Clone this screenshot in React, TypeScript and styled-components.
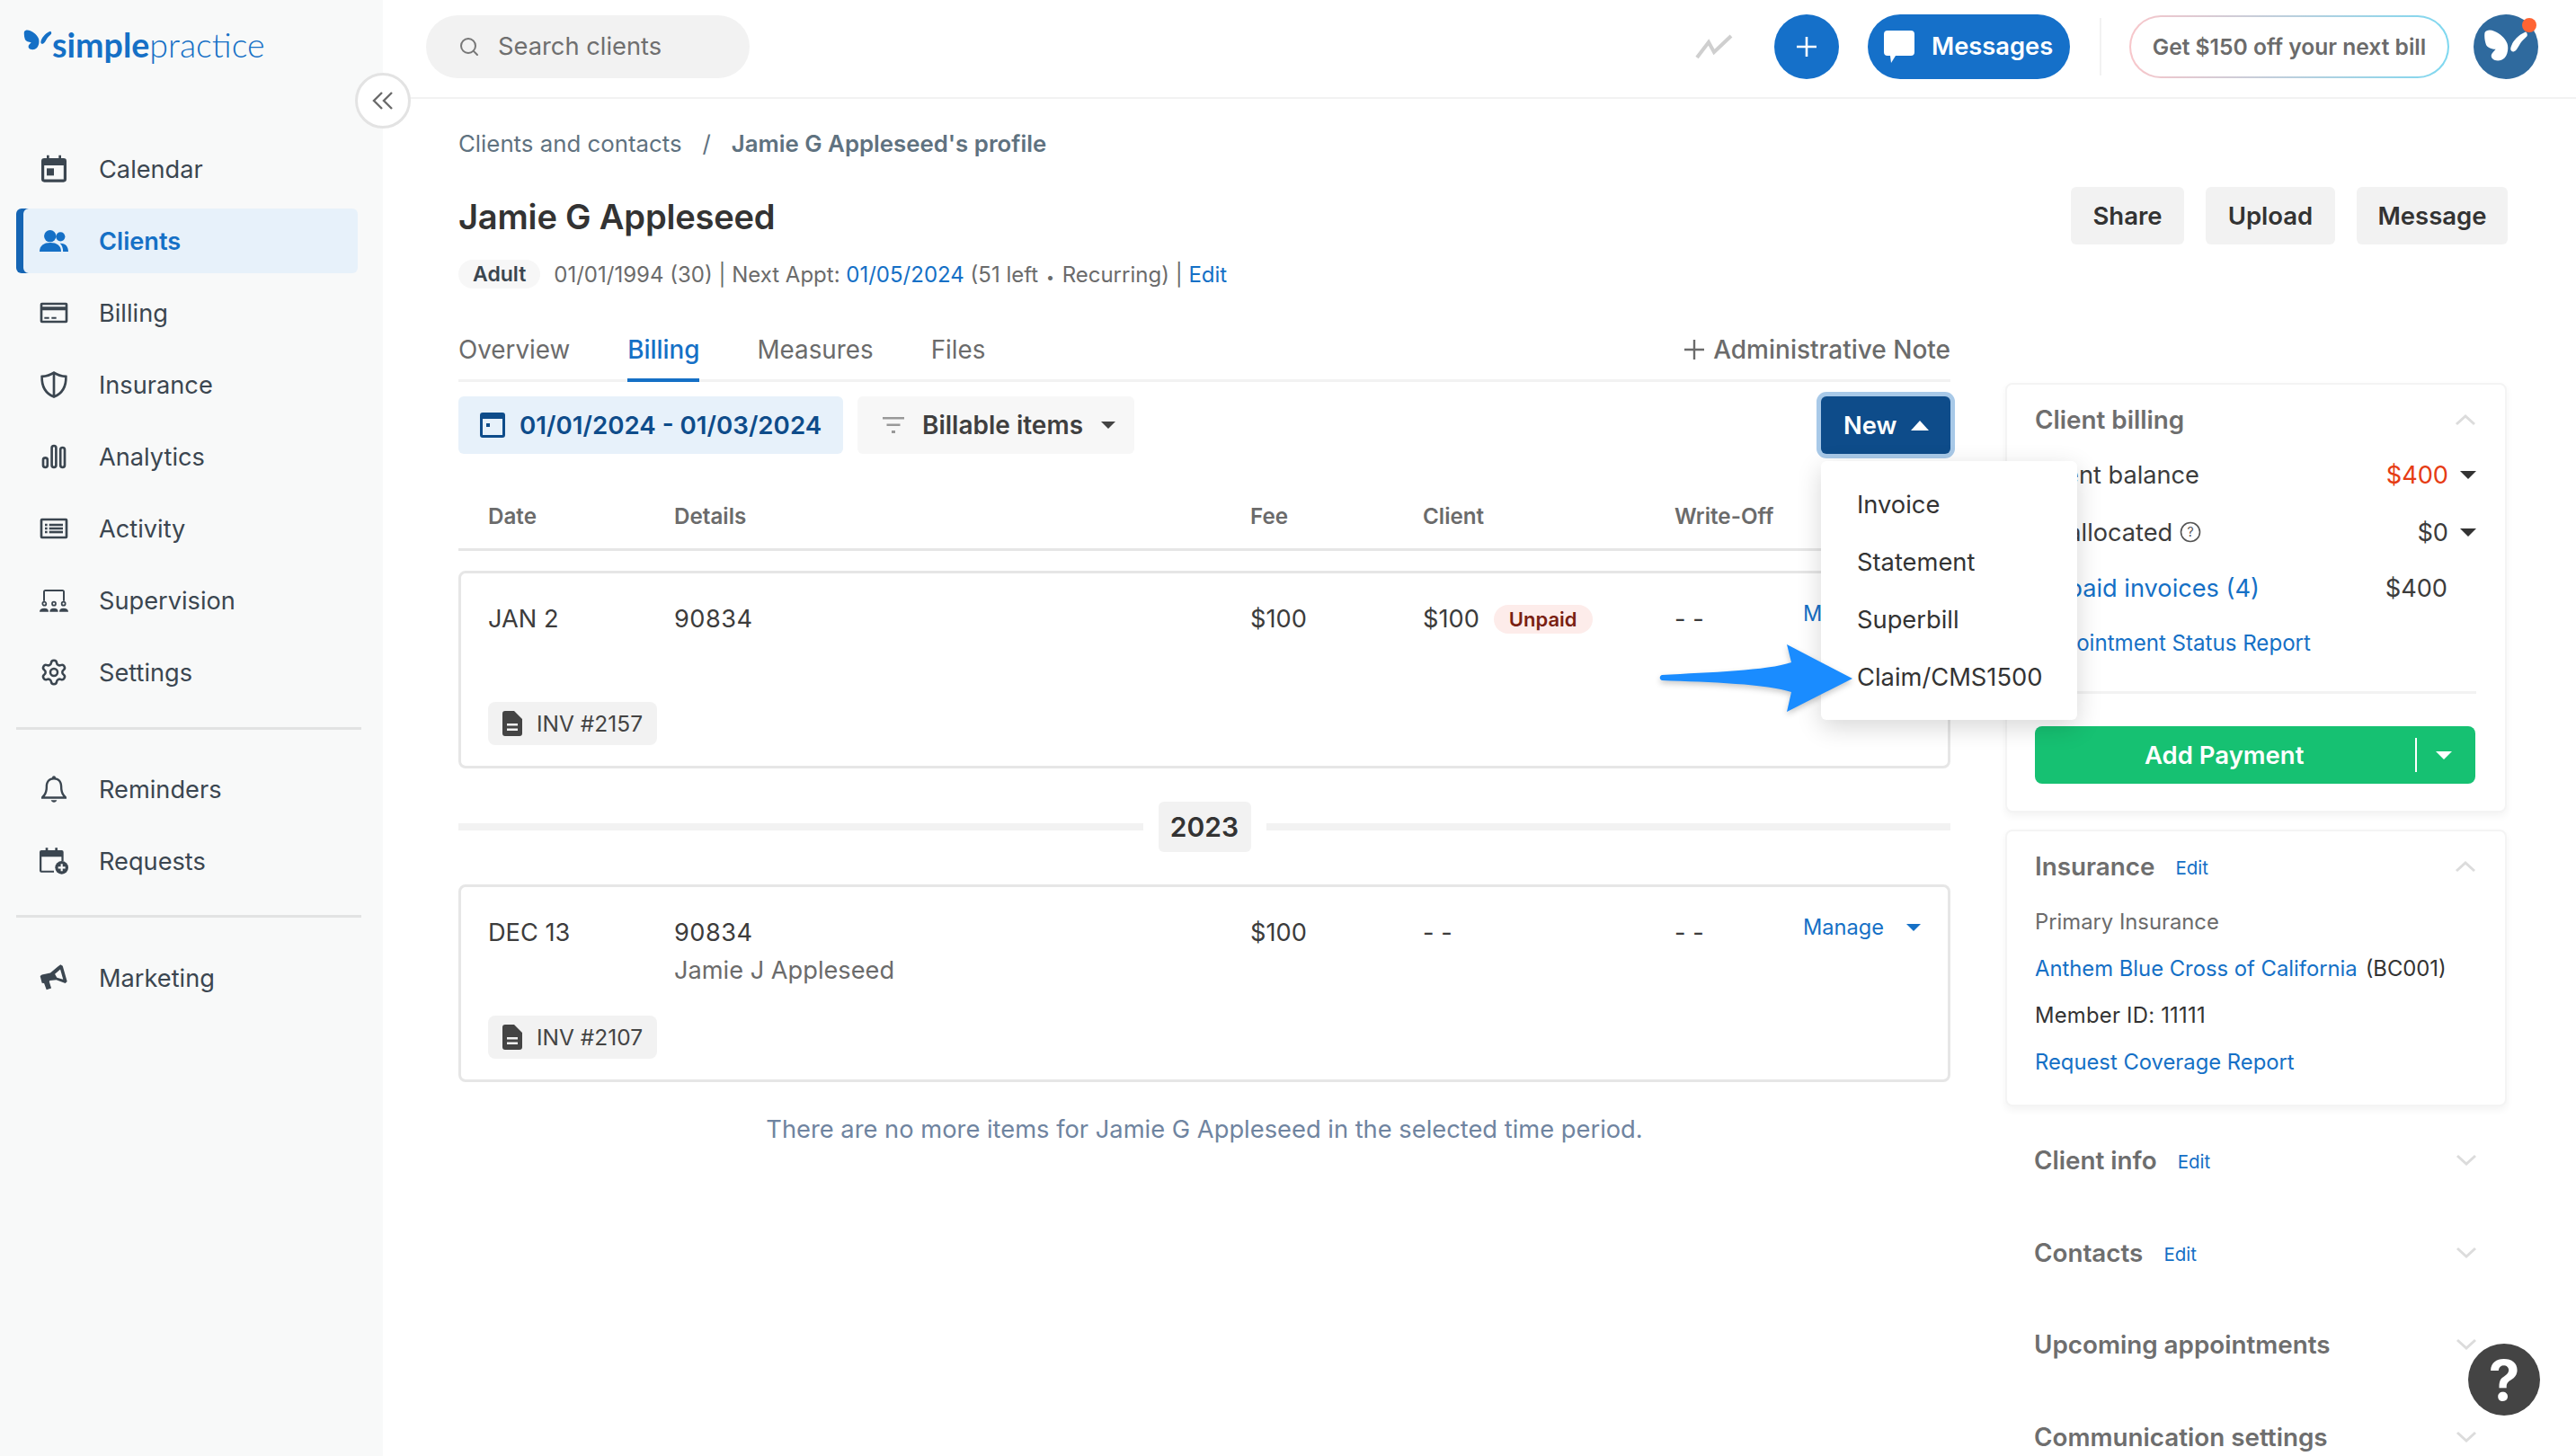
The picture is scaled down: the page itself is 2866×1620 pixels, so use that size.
import React from "react";
import styled, { createGlobalStyle } from "styled-components";
import { Settings, Search } from "lucide-react";

const Global = createGlobalStyle`
  html, body { margin: 0; padding: 0; background: #fff; }
  * { box-sizing: border-box; }
  body { font-family: Inter, "Liberation Sans", sans-serif; color: #333; overflow: hidden; }
`;

const Page = styled.div`position: relative; display: flex; width: 2866px; height: 1620px; overflow: hidden; background: #fff;`;
const Sidebar = styled.aside`width: 426px; flex: none; background: #f8f9f9; padding: 27px 0 0 18px;`;
const LogoWrap = styled.div`display: flex; align-items: flex-start; height: 125px; margin-left: 8px; color: #1570c6; svg { margin-top: 6px; }`;
const LogoText = styled.span`font-family: Lato, sans-serif; font-size: 37.6px; line-height: 48px; font-weight: 400; margin-top: -1px; b { font-weight: 700; } i { font-style: normal; font-weight: 300; }`;
const NavList = styled.nav`display: flex; flex-direction: column; gap: 8px; width: 380px;`;
const NavItem = styled.div<{ $active?: boolean }>`
  display: flex; align-items: center; gap: 34px; height: 72px; padding-left: 26px; border-radius: 6px;
  font-size: 27.2px; color: ${p => (p.$active ? "#1570c6" : "#3b4650")}; font-weight: ${p => (p.$active ? 600 : 400)};
  background: ${p => (p.$active ? "#e7f1fa" : "transparent")};
  box-shadow: ${p => (p.$active ? "inset 8px 0 0 #1565b4" : "none")};
`;
const NavIcon = styled.svg`width: 32px; height: 32px; flex: none; fill: currentColor;`;
const NavDivider = styled.div<{ $above: number; $below: number }>`width: 384px; height: 3px; background: #e2e3e3; margin: ${p => p.$above}px 0 ${p => p.$below}px;`;
const Collapse = styled.button`position: absolute; left: 395px; top: 81px; width: 62px; height: 62px; border-radius: 50%; background: #fff; border: 3px solid #e3e3e3; display: flex; align-items: center; justify-content: center; padding: 0; z-index: 3;`;

const Main = styled.div`flex: 1; min-width: 0; display: flex; flex-direction: column;`;
const Header = styled.header`height: 110px; flex: none; border-bottom: 2px solid #f2f2f2; display: flex; align-items: center; padding: 0 42px 5px 48px;`;
const SearchBox = styled.div`width: 360px; height: 70px; border-radius: 35px; background: #f2f2f2; display: flex; align-items: center; gap: 20px; padding-left: 36px; font-size: 27.3px; color: #6f6f6f; svg { color: #777; }`;
const Spacer = styled.div`flex: 1;`;
const Trend = styled.svg`width: 42px; height: 28px; margin-right: 46px;`;
const RoundBtn = styled.div`width: 72px; height: 72px; border-radius: 50%; background: #1570c9; display: flex; align-items: center; justify-content: center; margin-right: 32px;`;
const MsgBtn = styled.div`width: 225px; height: 72px; border-radius: 36px; background: #1570c9; color: #fff; font-size: 27.3px; font-weight: 600; display: flex; align-items: center; gap: 19px; padding-left: 18px;`;
const VRule = styled.div`width: 2px; height: 64px; background: #f2f2f2; margin: 0 31px 0 33px;`;
const Promo = styled.div`width: 356px; height: 70px; border-radius: 35px; border: 2.5px solid transparent; background: linear-gradient(#fff, #fff) padding-box, linear-gradient(90deg, #f8c6ca, #7ed8f0) border-box; display: flex; align-items: center; justify-content: center; font-size: 24.6px; font-weight: 600; color: #6b6b6b; white-space: nowrap;`;
const Avatar = styled.div`position: relative; width: 72px; height: 72px; border-radius: 50%; background: #2f6a9e; margin-left: 27px; display: flex; align-items: center; justify-content: center; color: #fff;`;
const Dot = styled.span`position: absolute; right: 2px; top: 4px; width: 16px; height: 16px; border-radius: 50%; background: #ff6433;`;

const Content = styled.div`padding: 33px 76px 0 84px;`;
const Crumbs = styled.div`display: flex; align-items: center; height: 32px; font-size: 25.8px; color: #5f7280; b { font-weight: 600; } span { margin: 0 23px; }`;
const TitleRow = styled.div`display: flex; align-items: center; justify-content: space-between; height: 64px; margin-top: 33px;`;
const Title = styled.h1`margin: 0 0 -1px; font-size: 38.1px; font-weight: 600; color: #333; letter-spacing: -0.2px;`;
const Actions = styled.div`display: flex; gap: 24px;`;
const GrayBtn = styled.div<{ $w: number }>`height: 64px; width: ${p => p.$w}px; border-radius: 6px; background: #f2f2f2; display: flex; align-items: center; justify-content: center; font-size: 27.5px; font-weight: 600; color: #333;`;
const MetaRow = styled.div`display: flex; align-items: center; height: 32px; margin-top: 17px; gap: 15px; font-size: 24px; color: #6b6b6b;`;
const Pill = styled.span`height: 32px; padding: 0 16px; border-radius: 16px; background: #f7f7f7; display: flex; align-items: center; font-size: 23px; font-weight: 600; color: #3b4650;`;
const Bullet = styled.span`font-size: 16px; margin: 0 2px;`;
const Link = styled.a`color: #1570c6; text-decoration: none;`;
const Columns = styled.div`display: grid; grid-template-columns: 1660px 558px; column-gap: 61px; margin-top: 32px;`;
const Left = styled.div``;
const Tabs = styled.div`display: flex; align-items: stretch; gap: 64px; height: 72px; border-bottom: 3px solid #f2f2f2;`;
const Tab = styled.div<{ $active?: boolean }>`display: flex; align-items: center; font-size: 27.8px; font-weight: ${p => (p.$active ? 500 : 400)}; color: ${p => (p.$active ? "#1570c6" : "#6b6b6b")}; height: 72px; ${p => p.$active && "box-shadow: inset 0 -4px 0 #1570c6;"}`;
const AdminNote = styled.div`margin-left: auto; display: flex; align-items: center; gap: 10px; font-size: 28px; font-weight: 500; color: #6b6b6b; height: 72px;`;
const Toolbar = styled.div`display: flex; gap: 16px; margin-top: 16px; height: 64px; align-items: center;`;
const DateBtn = styled.div`height: 64px; width: 428px; padding-left: 24px; border-radius: 6px; background: #e7f1fa; color: #0e4c8a; font-size: 27.7px; font-weight: 600; display: flex; align-items: center; gap: 16px; white-space: nowrap;`;
const FilterBtn = styled.div`height: 64px; width: 308px; padding-left: 28px; border-radius: 6px; background: #f7f7f7; color: #3f3f3f; font-size: 28px; font-weight: 600; display: flex; align-items: center; gap: 20px; white-space: nowrap;`;
const Caret = styled.span<{ $up?: boolean; $c?: string; $w?: number }>`
  display: inline-block; width: 0; height: 0; flex: none;
  border-left: ${p => (p.$w ?? 9)}px solid transparent; border-right: ${p => (p.$w ?? 9)}px solid transparent;
  ${p => (p.$up ? "border-bottom" : "border-top")}: ${p => Math.round((p.$w ?? 9) * 1.05)}px solid ${p => p.$c ?? "#333"};
`;
const NewWrap = styled.div`position: relative; margin-left: auto; z-index: 2;`;
const NewBtn = styled.div`width: 144px; height: 64px; border-radius: 6px; background: #0e4c8a; color: #fff; font-size: 27.3px; font-weight: 600; display: flex; align-items: center; gap: 16px; padding-left: 25px; box-shadow: 0 0 0 5px #a8c9e8;`;
const Menu = styled.div`position: absolute; left: 0; top: 72px; width: 285px; height: 288px; padding-top: 16px; background: #fff; border-radius: 6px; box-shadow: 0 8px 28px rgba(0,0,0,.16);`;
const MenuItem = styled.div`height: 64px; display: flex; align-items: center; padding-left: 40px; font-size: 27.3px; color: #333;`;
const Arrow = styled.svg`position: absolute; left: 1842px; top: 710px; width: 230px; height: 90px; z-index: 4; filter: drop-shadow(0 3px 3px rgba(0,0,0,.22));`;
const GridCols = "207px 641px 192px 280px 143px 1fr";
const THead = styled.div`display: grid; grid-template-columns: ${GridCols}; align-items: center; margin-top: 31px; height: 77px; padding: 2px 0 0 33px; border-bottom: 3px solid #e6e6e6; font-size: 24.2px; font-weight: 600; color: #6b6b6b;`;
const Card = styled.div<{ $mt: number }>`height: 220px; margin-top: ${p => p.$mt}px; padding: 33px 30px 0; border: 3px solid #e6e6e6; border-radius: 8px;`;
const RowGrid = styled.div`display: grid; grid-template-columns: ${GridCols}; height: 79px; font-size: 27.2px; line-height: 36px; color: #3c3c3c; white-space: nowrap;`;
const Code = styled.span`letter-spacing: 0.5px;`;
const Sub = styled.div`margin-top: 6px; color: #6b6b6b;`;
const ClientCell = styled.div`display: flex; align-items: flex-start; gap: 16px;`;
const Unpaid = styled.span`margin-top: 2px; height: 32px; padding: 0 17px; border-radius: 16px; background: #fdecea; color: #7a1f12; font-size: 22px; line-height: 32px; font-weight: 600;`;
const ManageCell = styled.div`display: flex; justify-content: space-between; align-items: center; height: 26px; line-height: 26px; font-size: 23.6px; color: #1570c6; margin-top: -1px;`;
const Chip = styled.div`display: inline-flex; align-items: center; gap: 16px; height: 48px; margin-top: 31px; padding: 0 16px; border-radius: 8px; background: #f2f2f2; font-size: 24.5px; color: #444;`;
const YearRow = styled.div`display: flex; align-items: center; gap: 17px; height: 56px; margin-top: 37px;`;
const YearLine = styled.div`flex: 1; height: 8px; background: #f2f2f2;`;
const YearChip = styled.div`width: 103px; height: 56px; border-radius: 6px; background: #f2f2f2; display: flex; align-items: center; justify-content: center; font-size: 30px; font-weight: 600; color: #333;`;
const EndNote = styled.div`margin-top: 35px; line-height: 36px; text-align: center; font-size: 27.3px; color: #6f84a0;`;
const Right = styled.div`margin-top: 73px;`;
const SideCard = styled.section<{ $h: number; $mt?: number }>`height: ${p => p.$h}px; margin-top: ${p => p.$mt ?? 0}px; padding: 21px 32px 0 31px; border: 2px solid #f4f4f4; border-radius: 8px; box-shadow: 0 4px 8px rgba(0,0,0,.05); background: #fff;`;
const CardHead = styled.div`display: flex; align-items: center; height: 36px; gap: 23px; font-size: 27.8px; font-weight: 600; color: #6e6e6e; white-space: nowrap;`;
const SmallEdit = styled.span`font-size: 20.5px; font-weight: 400; color: #1570c6; margin-top: 3px;`;
const Chevron = styled.svg`width: 24px; height: 14px; margin-left: auto; flex: none;`;
const BillingRow = styled.div<{ $mt: number }>`display: flex; align-items: center; height: 36px; margin-top: ${p => p.$mt}px; font-size: 27.2px; color: #3c3c3c; white-space: nowrap;`;
const Val = styled.span<{ $red?: boolean; $mr: number }>`margin-left: auto; margin-right: ${p => p.$mr}px; color: ${p => (p.$red ? "#e63c14" : "#3c3c3c")}; display: inline-flex;`;
const HelpDot = styled.svg`width: 24px; height: 24px; margin-left: 8px;`;
const SmallLink = styled.a`font-size: 24.1px; color: #1570c6;`;
const HRule = styled.div`height: 3px; background: #f2f2f2; margin-top: 36px;`;
const PayBtn = styled.div`height: 64px; margin-top: 36px; width: 490px; border-radius: 8px; background: #16c172; color: #fff; font-size: 27.5px; font-weight: 600; display: flex; align-items: center; padding-left: 122px;`;
const PayDivider = styled.div`width: 2px; height: 38px; background: #fff; margin-left: 124px; margin-right: 21px;`;
const InsRows = styled.div`margin-top: 17px;`;
const InsRow = styled.div<{ $gray?: boolean }>`height: 52px; display: flex; align-items: center; gap: 9px; font-size: 23.8px; color: ${p => (p.$gray ? "#6b6b6b" : "#333")}; white-space: nowrap;`;
const MemberId = styled.span`letter-spacing: 0.25px;`;
const Collapsed = styled.div`display: flex; flex-direction: column; gap: 66.5px; margin-top: 42px; padding: 0 33px 0 32px;`;
const Help = styled.div`position: fixed; left: 2746px; top: 1495px; width: 80px; height: 80px; border-radius: 50%; background: #444; color: #fff; display: flex; align-items: center; justify-content: center; font-size: 62px; font-weight: 700; z-index: 5;`;

const Butterfly = ({ w, h }: { w: number; h: number }) => (
  <svg width={w} height={h} viewBox="0 0 33 24" fill="currentColor" style={{ flex: "none" }}>
    <path d="M1 2C2 0 5-.5 8 1c4 1.500 8 5 9.500 9 1 3 .5 8-2 10.500-2 2-5 2.500-7.500 1.500-2.500-1-3-3.500-1-5.500l2-2.300C6 14 3 13 2 11 1 8 .5 5 1 2Z" />
    <path d="M31 1.500c1 .5 1.500 2 1 3-2 2-4 3.500-5 5.500-1.500 2.500-2.500 5-4.500 5.800-1.500.5-2.800-.8-2.500-2.300C20.500 10 24.500 4 31 1.500Z" />
  </svg>
);

const Icons: Record<string, React.ReactNode> = {
  calendar: <><path d="M6 .5h2V4H6zM16 .5h2V4h-2z" /><path fillRule="evenodd" d="M4 3h16a2.500 2.500 0 0 1 2.500 2.500v15A2.500 2.500 0 0 1 20 23H4a2.500 2.500 0 0 1-2.500-2.500v-15A2.500 2.500 0 0 1 4 3Zm-.1 6v11.600h16.200V9Z" /><rect x="6" y="11.500" width="6" height="6" /></>,
  clients: <><circle cx="8.800" cy="8" r="5" /><circle cx="17.500" cy="8.500" r="3.800" /><path d="M0 21c0-5 3.500-7.500 9-7.500s9 2.500 9 7.500Z" /><path d="M19.600 21c0-3-.8-5.300-2.600-7 4.500-.3 7 2.500 7 7Z" /></>,
  billing: <><path fillRule="evenodd" d="M2 3.500h20A1.500 1.500 0 0 1 23.500 5v14a1.500 1.500 0 0 1-1.500 1.500H2A1.500 1.500 0 0 1 .5 19V5A1.500 1.500 0 0 1 2 3.500Zm.5 6.500v8.500h19V10Zm0-4.500V7h19V5.500Z" /><path d="M4 15.500h4v1.500H4zM10 15.500h4v1.500h-4z" /></>,
  shield: <path fill="none" stroke="currentColor" strokeWidth="2" d="M12 2C15 4 18.500 5 22 5.200c.3 7.300-2.500 13.800-10 17C4.500 19 1.700 12.500 2 5.200 5.500 5 9 4 12 2Zm0 0v20" />,
  analytics: <g fill="none" stroke="currentColor" strokeWidth="2"><rect x="3" y="13" width="3.600" height="8" rx="1.800" /><rect x="10.200" y="3" width="3.600" height="18" rx="1.800" /><rect x="17.400" y="4.500" width="3.600" height="16.500" rx="1.800" /></g>,
  activity: <><path fillRule="evenodd" d="M2 3.500h20A1.500 1.500 0 0 1 23.500 5v14a1.500 1.500 0 0 1-1.500 1.500H2A1.500 1.500 0 0 1 .5 19V5A1.500 1.500 0 0 1 2 3.500Zm.5 2v13h19v-13Z" /><path d="M4.500 8h2v2h-2zM4.500 11h2v2h-2zM4.500 14h2v2h-2zM8 8h11.500v2H8zM8 11h11.500v2H8z" /><path d="M8 14h11.500v2H8z" /></>,
  supervision: <><path d="M3 12.500V5a2 2 0 0 1 2-2h14a2 2 0 0 1 2 2v7.500h-1.500v-8h-15v8Z" /><g fill="none" stroke="currentColor" strokeWidth="1.300"><circle cx="4" cy="14.800" r="1.500" /><circle cx="12" cy="14.800" r="1.500" /><circle cx="20" cy="14.800" r="1.500" /></g><path d="M0 21.500c0-2 1.500-3 4-3s3.500 1 3.500 3ZM8.500 21.500c0-2 1-3 3.500-3s3.500 1 3.500 3ZM16.500 21.500c0-2 1-3 3.500-3s4 1 4 3Z" /></>,
  bell: <><path d="M12 1c.9 0 1.500.7 1.500 1.500 3.800.8 5.500 3.700 5.500 7.500 0 4 1 6 3.500 8.500v1.500h-21v-1.500C4 16 5 14 5 10c0-3.800 1.700-6.700 5.500-7.500C10.500 1.700 11.100 1 12 1Zm0 3.200C8.500 4.200 6.800 6.500 6.800 10c0 3.500-.7 6-2.500 8.200h15.400C17.900 16 17.200 13.500 17.200 10c0-3.500-1.700-5.800-5.200-5.800Z" /><path d="M9.500 21.200h5c-.4 1.200-1.300 1.800-2.500 1.800s-2.100-.6-2.500-1.800Z" /></>,
  requests: <><path d="M5 1h2v3H5zM13 1h2v3h-2z" /><path fillRule="evenodd" d="M1.500 3h17A1.500 1.500 0 0 1 20 4.500V12h-1.700V8.500H1.700V20H12v1.500H1.500A1.500 1.500 0 0 1 0 20V4.500A1.500 1.500 0 0 1 1.500 3Z" /><circle cx="18.500" cy="17.500" r="5.500" /><path d="M17.700 14.500h1.600v2.200h2.200v1.600h-2.200v2.200h-1.600v-2.200h-2.200v-1.600h2.200Z" fill="#f8f9f9" /></>,
  megaphone: <path fillRule="evenodd" d="M17.500 1l1.800 1 3.700 13-1.500 1.500-7.500-2.800-5.500.5-.4 1 1.700 5.500-4 1.300-2-5.500-1.800-.1L.5 10.500l1.500-1.200 7-1.500 6-5Zm-.2 3.800-4.500 4 1.700 3 5.200 1.600Z" />,
};

const NavEntry = ({ icon, label, active }: { icon: string; label: string; active?: boolean }) => (
  <NavItem $active={active}>
    {icon === "settings" ? <Settings size={32} strokeWidth={1.9} style={{ flex: "none" }} /> : <NavIcon viewBox="0 0 24 24">{Icons[icon]}</NavIcon>}
    {label}
  </NavItem>
);

const Chev = ({ up }: { up?: boolean }) => (
  <Chevron viewBox="0 0 24 14" fill="none" stroke="#dcdcdc" strokeWidth="3">
    <path d={up ? "M2 12 12 3l10 9" : "M2 2l10 9 10-9"} />
  </Chevron>
);

const DocIcon = () => (
  <svg width="22" height="28" viewBox="0 0 22 28" style={{ flex: "none" }}>
    <path fillRule="evenodd" fill="#444" d="M3 0h10l9 9v16a3 3 0 0 1-3 3H3a3 3 0 0 1-3-3V3a3 3 0 0 1 3-3Zm2 14v2.500h12V14Zm0 5.500V22h12v-2.500Z" />
  </svg>
);

const rows = [
  { date: "JAN 2", sub: "", client: "$100", inv: "INV #2157", unpaid: true, mt: 22 },
  { date: "DEC 13", sub: "Jamie J Appleseed", client: "- -", inv: "INV #2107", unpaid: false, mt: 36 },
];

const BillingCard = (r: typeof rows[number]) => (
  <Card $mt={r.mt}>
    <RowGrid>
      <div>{r.date}</div>
      <div><Code>90834</Code>{r.sub && <Sub>{r.sub}</Sub>}</div>
      <div>$100</div>
      <ClientCell>{r.client}{r.unpaid && <Unpaid>Unpaid</Unpaid>}</ClientCell>
      <div>- -</div>
      <ManageCell>Manage<Caret $c="#1570c6" $w={8} /></ManageCell>
    </RowGrid>
    <Chip><DocIcon />{r.inv}</Chip>
  </Card>
);

export default function App() {
  return (
    <Page>
      <Global />
      <Sidebar>
        <LogoWrap>
          <Butterfly w={32} h={24} />
          <LogoText><b>simple</b><i>practice</i></LogoText>
        </LogoWrap>
        <NavList>
          <NavEntry icon="calendar" label="Calendar" />
          <NavEntry icon="clients" label="Clients" active />
          <NavEntry icon="billing" label="Billing" />
          <NavEntry icon="shield" label="Insurance" />
          <NavEntry icon="analytics" label="Analytics" />
          <NavEntry icon="activity" label="Activity" />
          <NavEntry icon="supervision" label="Supervision" />
          <NavEntry icon="settings" label="Settings" />
        </NavList>
        <NavDivider $above={25} $below={30} />
        <NavList>
          <NavEntry icon="bell" label="Reminders" />
          <NavEntry icon="requests" label="Requests" />
        </NavList>
        <NavDivider $above={24} $below={31} />
        <NavList>
          <NavEntry icon="megaphone" label="Marketing" />
        </NavList>
      </Sidebar>
      <Collapse>
        <svg width="24" height="20" viewBox="0 0 24 20" fill="none" stroke="#6b6b6b" strokeWidth="2.400">
          <path d="M11 1 2 10l9 9M22 1l-9 9 9 9" />
        </svg>
      </Collapse>
      <Main>
        <Header>
          <SearchBox><Search size={24} strokeWidth={2} />Search clients</SearchBox>
          <Spacer />
          <Trend viewBox="0 0 42 28" fill="none" stroke="#cfcfcf" strokeWidth="4"><path d="M2 26 15 9l6 11L40 2" /></Trend>
          <RoundBtn>
            <svg width="24" height="24" viewBox="0 0 24 24" stroke="#fff" strokeWidth="2.600"><path d="M12 1v22M1 12h22" /></svg>
          </RoundBtn>
          <MsgBtn>
            <svg width="34" height="36" viewBox="0 0 34 36" fill="#fff" style={{ flex: "none" }}>
              <path d="M4 0h26a4 4 0 0 1 4 4v20a4 4 0 0 1-4 4H13L8 36l-1-8H4a4 4 0 0 1-4-4V4a4 4 0 0 1 4-4Z" />
            </svg>
            Messages
          </MsgBtn>
          <VRule />
          <Promo>Get $150 off your next bill</Promo>
          <Avatar>
            <Butterfly w={50} h={37} />
            <Dot />
          </Avatar>
        </Header>
        <Content>
          <Crumbs>Clients and contacts<span>/</span><b>Jamie G Appleseed's profile</b></Crumbs>
          <TitleRow>
            <Title>Jamie G Appleseed</Title>
            <Actions>
              <GrayBtn $w={126}>Share</GrayBtn>
              <GrayBtn $w={144}>Upload</GrayBtn>
              <GrayBtn $w={168}>Message</GrayBtn>
            </Actions>
          </TitleRow>
          <MetaRow>
            <Pill>Adult</Pill>
            <div>01/01/1994 (30) | Next Appt: <Link>01/05/2024</Link> (51 left <Bullet>•</Bullet> Recurring) | <Link>Edit</Link></div>
          </MetaRow>
          <Columns>
            <Left>
              <Tabs>
                <Tab>Overview</Tab>
                <Tab $active>Billing</Tab>
                <Tab>Measures</Tab>
                <Tab>Files</Tab>
                <AdminNote>
                  <svg width="22" height="22" viewBox="0 0 22 22" stroke="#6b6b6b" strokeWidth="2.400"><path d="M11 0v22M0 11h22" /></svg>
                  Administrative Note
                </AdminNote>
              </Tabs>
              <Toolbar>
                <DateBtn>
                  <svg width="28" height="28" viewBox="0 0 28 28" style={{ flex: "none" }}>
                    <path fillRule="evenodd" fill="#0e4c8a" d="M3 0h22a3 3 0 0 1 3 3v22a3 3 0 0 1-3 3H3a3 3 0 0 1-3-3V3a3 3 0 0 1 3-3Zm0 7v18h22V7Z" />
                    <rect x="7" y="12" width="4" height="4" fill="#0e4c8a" />
                  </svg>
                  01/01/2024 - 01/03/2024
                </DateBtn>
                <FilterBtn>
                  <svg width="24" height="18" viewBox="0 0 24 18" fill="#999" style={{ flex: "none" }}>
                    <path d="M0 0h24v2.500H0zM4.500 7.500h15V10h-15zM10 15h4v3h-4z" />
                  </svg>
                  Billable items
                  <Caret $w={8} $c="#444" />
                </FilterBtn>
                <NewWrap>
                  <NewBtn>New<Caret $up $c="#fff" $w={10} /></NewBtn>
                  <Menu>
                    <MenuItem>Invoice</MenuItem>
                    <MenuItem>Statement</MenuItem>
                    <MenuItem>Superbill</MenuItem>
                    <MenuItem>Claim/CMS1500</MenuItem>
                  </Menu>
                </NewWrap>
              </Toolbar>
              <THead>
                <div>Date</div><div>Details</div><div>Fee</div><div>Client</div><div>Write-Off</div>
              </THead>
              <BillingCard {...rows[0]} />
              <YearRow><YearLine /><YearChip>2023</YearChip><YearLine /></YearRow>
              <BillingCard {...rows[1]} />
              <EndNote>There are no more items for Jamie G Appleseed in the selected time period.</EndNote>
            </Left>
            <Right>
              <SideCard $h={478}>
                <CardHead>Client billing<Chev up /></CardHead>
                <BillingRow $mt={25}>Client balance<Val $red $mr={13}>$400</Val><Caret $w={9} $c="#333" /></BillingRow>
                <BillingRow $mt={28}>
                  Unallocated
                  <HelpDot viewBox="0 0 24 24" fill="none" stroke="#555" strokeWidth="1.600">
                    <circle cx="12" cy="12" r="10.500" />
                    <text x="12" y="17" textAnchor="middle" fontSize="14" fill="#555" stroke="none" fontFamily="Inter">?</text>
                  </HelpDot>
                  <Val $mr={13}>$0</Val><Caret $w={9} $c="#333" />
                </BillingRow>
                <BillingRow $mt={26}><Link>Unpaid invoices (4)</Link><Val $mr={32}>$400</Val></BillingRow>
                <BillingRow $mt={25}><SmallLink>Appointment Status Report</SmallLink></BillingRow>
                <HRule />
                <PayBtn>
                  Add Payment
                  <PayDivider />
                  <Caret $w={9} $c="#fff" />
                </PayBtn>
              </SideCard>
              <SideCard $h={308} $mt={19}>
                <CardHead>Insurance<SmallEdit>Edit</SmallEdit><Chev up /></CardHead>
                <InsRows>
                  <InsRow $gray>Primary Insurance</InsRow>
                  <InsRow><Link>Anthem Blue Cross of California</Link>(BC001)</InsRow>
                  <InsRow><MemberId>Member ID: 11111</MemberId></InsRow>
                  <InsRow><Link>Request Coverage Report</Link></InsRow>
                </InsRows>
              </SideCard>
              <Collapsed>
                <CardHead>Client info<SmallEdit>Edit</SmallEdit><Chev /></CardHead>
                <CardHead>Contacts<SmallEdit>Edit</SmallEdit><Chev /></CardHead>
                <CardHead>Upcoming appointments<Chev /></CardHead>
                <CardHead>Communication settings<Chev /></CardHead>
              </Collapsed>
            </Right>
          </Columns>
        </Content>
      </Main>
      <Arrow viewBox="0 0 230 90">
        <path fill="#1a8cff" d="M7 41C60 38 125 36 151 27L146 7l73 38-73 37 5-22C125 51 60 49 7 47c-3-1-3-5 0-6Z" />
      </Arrow>
      <Help>?</Help>
    </Page>
  );
}
